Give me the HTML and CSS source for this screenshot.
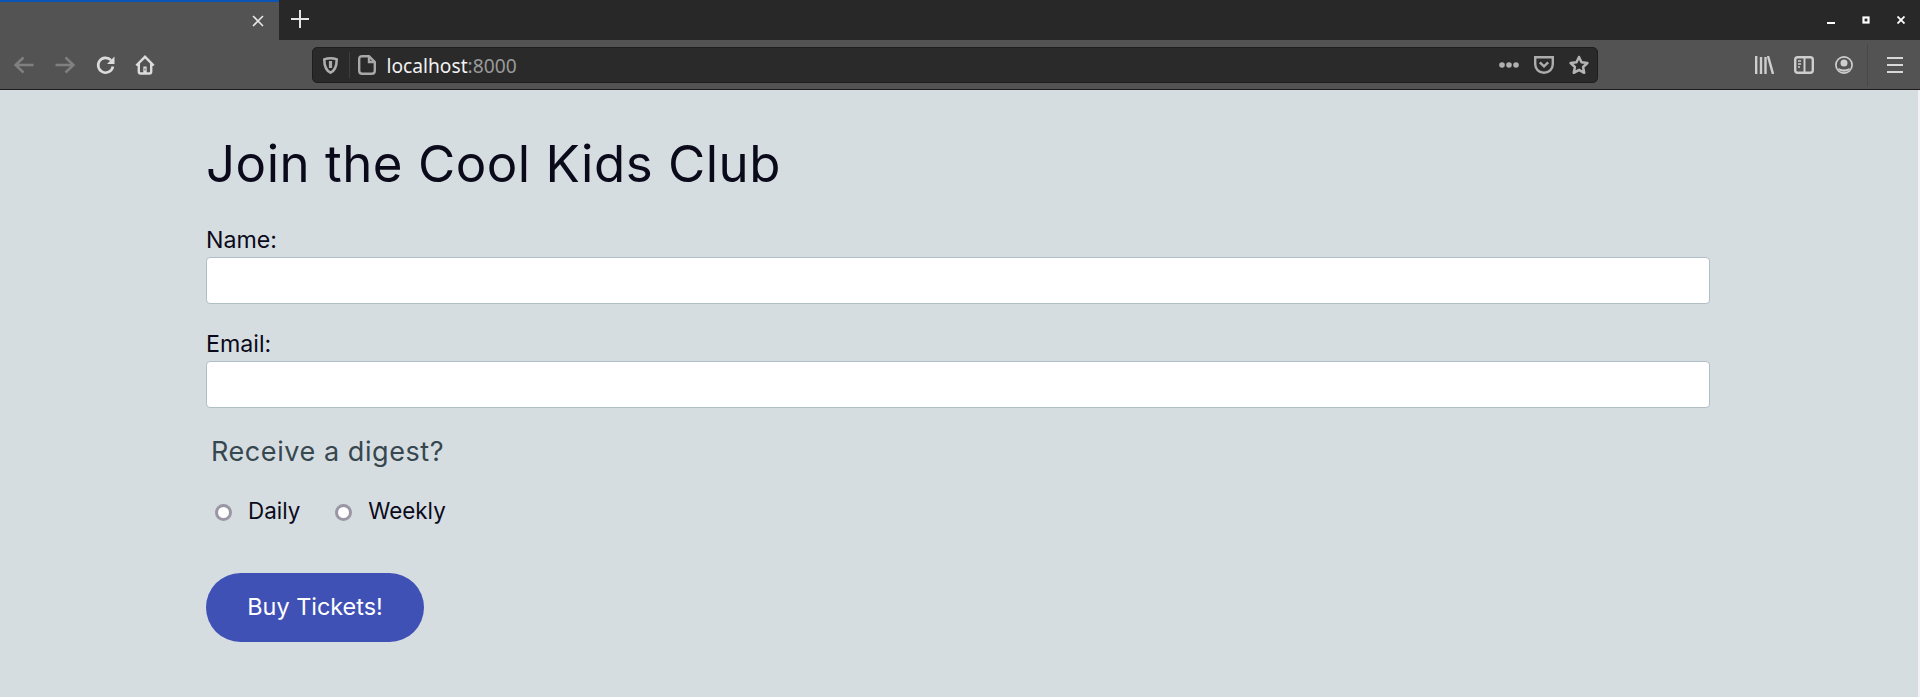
FILE: index.html
```html
<!DOCTYPE html>
<html lang="en">
<head>
<meta charset="utf-8">
<title>Join the Cool Kids Club</title>
<link rel="stylesheet" href="styles.css">
</head>
<body>
<header class="chrome">
  <div class="tabstrip">
    <div class="tab">
      <svg class="ico tab-close" width="12" height="12" viewBox="0 0 12 12"><path d="M1 1l10 10M11 1L1 11" stroke="#e6e6e6" stroke-width="1.6" fill="none"/></svg>
    </div>
    <svg class="ico new-tab" width="18" height="18" viewBox="0 0 18 18"><path d="M9 0v18M0 9h18" stroke="#e6e6e6" stroke-width="2" fill="none"/></svg>
    <div class="win-controls">
      <svg class="ico" width="8" height="8" viewBox="0 0 8 8"><path d="M0 7h8" stroke="#fff" stroke-width="2"/></svg>
      <svg class="ico" width="8" height="8" viewBox="0 0 8 8"><rect x="1.5" y="1.5" width="5" height="5" fill="none" stroke="#fff" stroke-width="2.2"/></svg>
      <svg class="ico" width="8" height="8" viewBox="0 0 8 8"><path d="M.5.5l7 7M7.500.5l-7 7" stroke="#fff" stroke-width="1.8" fill="none"/></svg>
    </div>
  </div>
  <div class="toolbar">
    <div class="nav">
      <svg class="ico" width="20" height="20" viewBox="0 0 20 20"><path d="M19.500 10H1.500M9.500 2.500L1.500 10l8 7.500" fill="none" stroke="#808080" stroke-width="2.400"/></svg>
      <svg class="ico" width="20" height="20" viewBox="0 0 20 20"><path d="M.5 10h18M10.500 2.500l8 7.500-8 7.500" fill="none" stroke="#808080" stroke-width="2.400"/></svg>
      <svg class="ico" width="20" height="20" viewBox="0 0 20 20"><path d="M15 5.200A7.400 7.400 0 1 0 16.900 11.500" fill="none" stroke="#dcdcdc" stroke-width="2.600"/><path d="M18.500 1.500v7.500h-7.500z" fill="#dcdcdc"/></svg>
      <svg class="ico home" width="20" height="20" viewBox="0 0 20 20"><path d="M1.300 10.500L10 1.800l8.700 8.700M3.800 8.500v8.200q0 1.800 1.800 1.800h8.800q1.800 0 1.800-1.800V8.500M10 18.500v-5" fill="none" stroke="#dcdcdc" stroke-width="2.400"/><rect x="8.400" y="11.500" width="3.200" height="7" fill="#dcdcdc"/><rect x="9.500" y="13.500" width="1" height="2" fill="#535353"/></svg>
    </div>
    <div class="urlbar">
      <svg class="ico shield" width="15" height="17" viewBox="0 0 15 17"><path d="M7.500 1.300C5 1.300 3 1.700 1.300 2.400 1.300 9 2.800 13.300 7.500 15.700 12.200 13.300 13.700 9 13.700 2.400 12 1.700 10 1.300 7.500 1.300z" fill="none" stroke="#adadad" stroke-width="2.600"/><path d="M7.500 4v7" stroke="#adadad" stroke-width="3.200"/></svg>
      <span class="url-sep"></span>
      <svg class="ico" width="18" height="20" viewBox="0 0 18 20"><path d="M11 1.200H4.200Q1.200 1.200 1.200 4.200v11.600q0 3 3 3h9.600q3 0 3-3V7zM11 1.200v5.800h5.800" fill="none" stroke="#a8a8a8" stroke-width="2.400"/></svg>
      <div class="url-text">localhost<span class="port">:8000</span></div>
      <svg class="ico" width="20" height="6" viewBox="0 0 20 6"><circle cx="3" cy="3" r="2.800" fill="#b0b0b0"/><circle cx="10" cy="3" r="2.800" fill="#b0b0b0"/><circle cx="17" cy="3" r="2.800" fill="#b0b0b0"/></svg>
      <svg class="ico" width="20" height="18" viewBox="0 0 20 18"><path d="M1.200 1.300h17.600v7a8.800 8.500 0 0 1-17.600 0z" fill="none" stroke="#adadad" stroke-width="2.400"/><path d="M5.800 6.300l4.200 4 4.200-4" fill="none" stroke="#adadad" stroke-width="2.400"/></svg>
      <svg class="ico" width="20" height="20" viewBox="0 0 20 20"><path d="M10 2l2.500 5.200 5.900.8-4.300 4 1.100 5.800-5.200-2.900-5.200 2.900 1.100-5.800-4.300-4 5.900-.8z" fill="none" stroke="#b4b4b4" stroke-width="2.500" stroke-linejoin="round"/></svg>
    </div>
    <div class="tools">
      <svg class="ico" width="19" height="18" viewBox="0 0 19 18"><path d="M1.200 0v18M6 1v17M10.500 1v17M13 0l5 18" fill="none" stroke="#cecece" stroke-width="2.400"/></svg>
      <svg class="ico" width="20" height="18" viewBox="0 0 20 18"><rect x="1.200" y="1.200" width="17.600" height="15.600" rx="2.500" fill="none" stroke="#cecece" stroke-width="2.400"/><path d="M10.500 1v16" stroke="#cecece" stroke-width="2"/><path d="M4 5h3M4 8h3M4 11h2" stroke="#cecece" stroke-width="1.500"/></svg>
      <svg class="ico account" width="18" height="18" viewBox="0 0 18 18"><circle cx="9" cy="9" r="8.100" fill="none" stroke="#cecece" stroke-width="1.700"/><circle cx="9" cy="7" r="3.500" fill="#cecece"/><path d="M3.500 12q5.500 3.200 11 0v2q-5.500 3.500-11 0z" fill="#cecece"/></svg>
      <span class="tool-sep"></span>
      <svg class="ico" width="16" height="16" viewBox="0 0 16 16"><path d="M0 1h16M0 8h16M0 15h16" stroke="#d8d8d8" stroke-width="2.200"/></svg>
    </div>
  </div>
</header>
<main class="page">
  <form class="signup">
    <h1 class="title">Join the Cool Kids Club</h1>
    <div class="field">
      <label class="field-label" for="name">Name:</label>
      <input class="field-input" id="name" type="text">
    </div>
    <div class="field">
      <label class="field-label" for="email">Email:</label>
      <input class="field-input" id="email" type="email">
    </div>
    <fieldset class="digest">
      <legend class="digest-title">Receive a digest?</legend>
      <div class="radios">
        <label class="radio"><input type="radio" name="digest"><span>Daily</span></label>
        <label class="radio"><input type="radio" name="digest"><span>Weekly</span></label>
      </div>
    </fieldset>
    <button class="submit" type="button">Buy Tickets!</button>
  </form>
</main>
</body>
</html>
```
FILE: styles.css
```css
* { box-sizing: border-box; }
html, body { margin: 0; height: 100%; }
body {
  display: flex;
  flex-direction: column;
  height: 697px;
  overflow: hidden;
  background: #d6dde1;
  font-family: Inter, "Liberation Sans", sans-serif;
  color: #0a0a1a;
}
.ico { display: block; flex: none; }

.chrome { flex: none; }
.tabstrip {
  display: flex;
  align-items: center;
  height: 40px;
  background: #282828;
}
.tab {
  display: flex;
  align-items: center;
  justify-content: flex-end;
  width: 279px;
  height: 40px;
  padding-right: 15px;
  background: #535353;
  border-top: 2px solid #0a54b4;
}
.new-tab { margin-left: 12px; margin-top: -2px; }
.win-controls {
  display: flex;
  gap: 27px;
  margin-left: auto;
  padding-right: 15px;
  margin-top: -1px;
}
.toolbar {
  display: flex;
  align-items: center;
  height: 50px;
  padding-top: 1px;
  background: #535353;
  border-bottom: 1px solid #1c1c1c;
}
.nav {
  display: flex;
  gap: 21px;
  width: 312px;
  padding-left: 14px;
}
.home { margin-left: -2px; }
.urlbar {
  display: flex;
  align-items: center;
  width: 1286px;
  height: 36px;
  padding: 0 8px 0 10px;
  gap: 15px;
  background: #2a2a2a;
  border: 1px solid #1e1e1e;
  border-radius: 5px;
}
.url-sep { width: 1px; height: 26px; margin: 0 -7px 0 -4px; background: #3e3e3e; }
.url-text {
  flex: 1;
  margin-left: -4.5px;
  font-family: "Noto Sans", sans-serif;
  font-size: 19.2px;
  color: #f2f2f2;
}
.port { color: #9a9a9a; }
.tools {
  display: flex;
  align-items: center;
  gap: 20px;
  padding-left: 157px;
}
.account { margin-left: 1px; margin-right: -1px; }
.tool-sep { width: 1px; height: 42px; margin: 0 -1px 0 -5px; background: #484848; }

.page {
  flex: 1;
  padding-left: 206px;
  border-right: 2px solid #f0f2f3;
}
.signup { display: flex; flex-direction: column; width: 1504px; }
.title {
  margin: 44px 0 0;
  font-size: 51px;
  font-weight: 400;
  letter-spacing: 0.5px;
  line-height: 60px;
}
.field { display: flex; flex-direction: column; margin-top: 30px; }
.field + .field { margin-top: 24px; }
.field-label { font-size: 23.2px; line-height: 33px; }
.field-input {
  height: 47px;
  padding: 0 12px;
  background: #fff;
  border: 1px solid #b0bec5;
  border-radius: 4px;
}
.digest {
  margin: 24px 0 0;
  padding: 0 0 0 5px;
  border: 0;
}
.digest-title {
  padding: 0;
  font-size: 27px;
  letter-spacing: 0.57px;
  line-height: 40px;
  color: #37474f;
}
.radios { display: flex; gap: 35px; margin-top: 21.5px; padding-left: 4px; }
.radio { display: flex; align-items: center; gap: 16px; font-size: 22.4px; line-height: 34px; }
.radio input {
  appearance: none;
  width: 17px;
  height: 17px;
  margin: 4px 0 0;
  background: #fff;
  border: 3px solid #9a96a4;
  border-radius: 50%;
}
.submit {
  align-self: flex-start;
  width: 218px;
  height: 69px;
  margin-top: 45px;
  padding: 0 0 2px;
  color: #fff;
  background: #3f51b5;
  border: 0;
  border-radius: 35px;
  font: 400 23.4px Inter, sans-serif;
}
```
